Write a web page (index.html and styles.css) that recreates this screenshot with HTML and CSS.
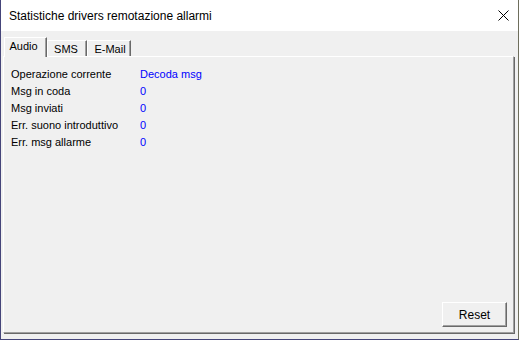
FILE: index.html
```html
<!DOCTYPE html>
<html lang="it">
<head>
  <meta charset="UTF-8">
  <title>Statistiche drivers remotazione allarmi</title>
  <link rel="stylesheet" href="styles.css">
</head>
<body>
  <div class="window">
    <div class="titlebar">
      <span class="title">Statistiche drivers remotazione allarmi</span>
      <svg class="close" width="11" height="11" viewBox="0 0 11 11">
        <path d="M0.5 0.5 L10.5 10.5 M10.5 0.5 L0.5 10.5" stroke="#000" stroke-width="1" fill="none"/>
      </svg>
    </div>
    <div class="client">
      <div class="tabs">
        <div class="tab active">Audio</div>
        <div class="tab tab-sms">SMS</div>
        <div class="tab tab-mail">E-Mail</div>
      </div>
      <div class="pane">
        <div class="stats">
          <div class="row"><span class="label">Operazione corrente</span><span class="value">Decoda msg</span></div>
          <div class="row"><span class="label">Msg in coda</span><span class="value">0</span></div>
          <div class="row"><span class="label">Msg inviati</span><span class="value">0</span></div>
          <div class="row"><span class="label">Err. suono introduttivo</span><span class="value">0</span></div>
          <div class="row"><span class="label">Err. msg allarme</span><span class="value">0</span></div>
        </div>
        <div class="actions">
          <button type="button">Reset</button>
        </div>
      </div>
    </div>
  </div>
</body>
</html>
```

FILE: styles.css
```css
body {
  margin: 0;
  padding: 0;
  font-family: 'Liberation Sans', Arial, sans-serif;
  font-size: 11px;
  color: #000;
  background: #f0f0f0;
}

.window {
  width: 519px;
  height: 340px;
  box-sizing: border-box;
  border-left: 1px solid #45457a;
  border-right: 1px solid #6e6e5c;
  border-bottom: 1px solid #45457a;
  background: #f0f0f0;
  display: flex;
  flex-direction: column;
}

.titlebar {
  height: 31px;
  flex: none;
  background: #fff;
  display: flex;
  align-items: center;
  justify-content: space-between;
  padding: 0 9px 0 8px;
}

.title {
  font-size: 12px;
  color: #000;
}

.close {
  display: block;
}

.client {
  flex: 1;
  display: flex;
  flex-direction: column;
  padding: 6px 3px 5px 2px;
}

.tabs {
  display: flex;
  align-items: flex-end;
  height: 19px;
  padding-left: 1px;
  position: relative;
  z-index: 1;
}

.tab {
  height: 16px;
  line-height: 16px;
  box-sizing: border-box;
  border-top: 1px solid #fff;
  border-left: 1px solid #fff;
  border-right: 1px solid #696969;
  box-shadow: inset -1px 0 0 #a0a0a0;
  background: #f0f0f0;
  text-align: center;
}

.tab.active {
  height: 20px;
  line-height: 17px;
  width: 43px;
  margin-bottom: -1px;
  padding-right: 4px;
}

.tab-sms {
  width: 40px;
  padding-right: 2px;
}

.tab-mail {
  width: 44px;
  padding-left: 2px;
}

.pane {
  flex: 1;
  display: flex;
  flex-direction: column;
  border-top: 1px solid #fff;
  border-left: 1px solid #fff;
  border-right: 1px solid #a0a0a0;
  border-bottom: 1px solid #a0a0a0;
  box-shadow: 1px 1px 0 #696969;
  margin-right: 1px;
  margin-bottom: 1px;
  padding: 9px 6px 5px 7px;
}

.row {
  display: flex;
  line-height: 17px;
}

.label {
  width: 129px;
}

.value {
  color: #0000ff;
}

.actions {
  margin-top: auto;
  display: flex;
  justify-content: flex-end;
}

button {
  width: 65px;
  height: 25px;
  font-family: 'Liberation Sans', Arial, sans-serif;
  font-size: 12px;
  color: #000;
  background: #f0f0f0;
  border-top: 1px solid #fff;
  border-left: 1px solid #fff;
  border-right: 1px solid #696969;
  border-bottom: 1px solid #696969;
  box-shadow: inset -1px -1px 0 #a0a0a0;
  padding: 0;
}
```
